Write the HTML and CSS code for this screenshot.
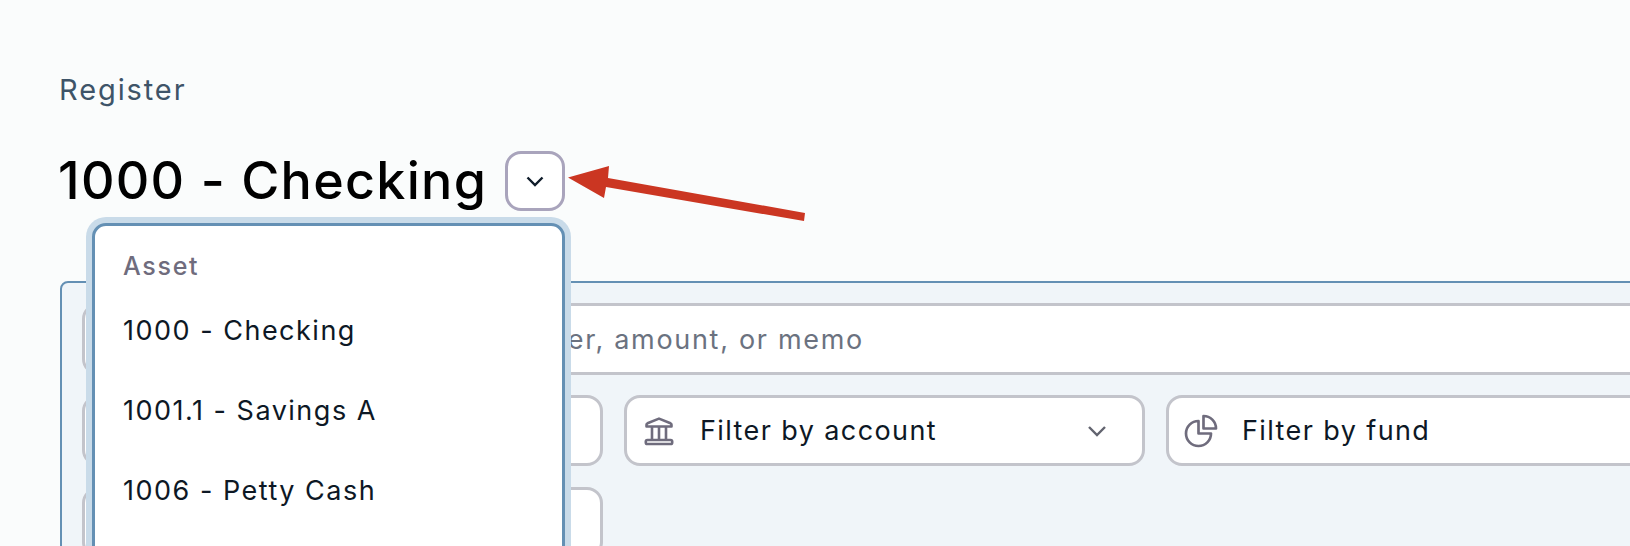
FILE: index.html
```html
<!DOCTYPE html>
<html lang="en">
<head>
  <meta charset="UTF-8">
  <title>Register</title>
  <link rel="stylesheet" href="styles.css">
</head>
<body>
  <div class="page">
    <div class="crumb">Register</div>
    <div class="title-row">
      <h1>1000 - Checking</h1>
      <button class="title-toggle">
        <svg width="24" height="24" viewBox="0 0 24 24" fill="none" stroke="#101c2a" stroke-width="2.4">
          <path d="M4.5 8.5 12 16l7.5-7.5"/>
        </svg>
      </button>
    </div>

    <div class="account-menu">
      <div class="menu-label">Asset</div>
      <div class="menu-item">1000 - Checking</div>
      <div class="menu-item">1001.1 - Savings A</div>
      <div class="menu-item">1006 - Petty Cash</div>
    </div>

    <div class="panel">
      <div class="search">Search by payee or payer, amount, or memo</div>
      <div class="filters">
        <div class="filter"></div>
        <div class="filter">
          <svg class="filter-icon" width="40" height="40" viewBox="-5 -5 40 40" fill="none" stroke="#6f6c7d" stroke-width="2.6" stroke-linejoin="round">
            <path d="M2.5 10.5V8.8c0-.7.4-1.2 1-1.5L15 2.6l11.5 4.7c.6.3 1 .8 1 1.5v1.7z"/>
            <path d="M8 11v13M15 11v13M22 11v13"/>
            <rect x="1.8" y="24" width="26.4" height="4" rx="1.6"/>
          </svg>
          <span>Filter by account</span>
          <svg class="filter-caret" width="22" height="22" viewBox="0 0 22 22" fill="none" stroke="#62646f" stroke-width="2.4">
            <path d="M3 7l8 8 8-8"/>
          </svg>
        </div>
        <div class="filter">
          <svg class="filter-icon" width="40" height="40" viewBox="0 0 24 24" fill="none" stroke="#6f6c7d" stroke-width="1.6" stroke-linejoin="round">
            <path d="M10.5 6a7.5 7.5 0 1 0 7.5 7.5h-7.5V6Z"/>
            <path d="M13.5 10.5H21A7.5 7.5 0 0 0 13.5 3v7.5Z"/>
          </svg>
          <span>Filter by fund</span>
        </div>
        <div class="filter"></div>
      </div>
    </div>

    <svg class="callout" width="260" height="72" viewBox="0 0 260 72">
      <path d="M2 27.5 43 16 42 28 239 63 238 71 40 37 38 48z" fill="#cb3622"/>
    </svg>
  </div>
</body>
</html>
```

FILE: styles.css
```css
html, body {
  height: 100%;
}

body {
  margin: 0;
  overflow: hidden;
  background-color: #fafcfc;
  font-family: "Inter", "Liberation Sans", sans-serif;
  color: #0d1825;
}

.page {
  position: relative;
  width: 1900px;
  height: 546px;
  padding: 70px 0 0 60px;
  box-sizing: border-box;
  overflow: hidden;
}

.crumb {
  margin-left: -1px;
  font-size: 29px;
  line-height: 40px;
  letter-spacing: 1.9px;
  color: #3e5468;
}

.title-row {
  display: flex;
  align-items: center;
  gap: 18px;
  margin-top: 41px;
  margin-left: -2px;
}

h1 {
  margin: 0;
  font-size: 52px;
  line-height: 60px;
  font-weight: 500;
  letter-spacing: 1.3px;
  color: #000;
}

.title-toggle {
  display: flex;
  align-items: center;
  justify-content: center;
  width: 60px;
  height: 60px;
  padding: 0;
  border: 3px solid #a9a4bc;
  border-radius: 16px;
  background-color: #fff;
}

.account-menu {
  position: absolute;
  left: 92px;
  top: 223px;
  width: 467px;
  height: 400px;
  border: 3px solid #6490b4;
  border-radius: 14px;
  background-color: #fff;
  box-shadow: 0 0 0 6px #c9dbe9;
  z-index: 2;
}

.menu-label {
  padding: 24px 0 0 28px;
  font-size: 25px;
  line-height: 32px;
  font-weight: 500;
  letter-spacing: 1.7px;
  color: #6f6c7d;
}

.menu-item {
  padding: 0 0 0 28px;
  font-size: 27px;
  line-height: 80px;
  letter-spacing: 1.5px;
}

.menu-label + .menu-item {
  margin-top: 9px;
}

.panel {
  margin-top: 70px;
  padding: 20px;
  border: 2px solid #6490b4;
  border-radius: 8px 0 0 8px;
  background-color: #f0f5f9;
}

.search {
  display: flex;
  align-items: center;
  height: 66px;
  padding-left: 144px;
  border: 3px solid #c3c4cb;
  border-radius: 16px;
  background-color: #fff;
  font-size: 27px;
  letter-spacing: 1.7px;
  color: #6b7280;
}

.filters {
  display: grid;
  grid-template-columns: repeat(3, 521px);
  gap: 21px;
  margin-top: 20px;
}

.filter {
  display: flex;
  align-items: center;
  gap: 21px;
  height: 65px;
  padding: 0 34px 0 12px;
  border: 3px solid #c3c4cb;
  border-radius: 16px;
  background-color: #fff;
  font-size: 27px;
  letter-spacing: 1.4px;
}

.filter-caret {
  margin-left: auto;
}

.callout {
  position: absolute;
  left: 566px;
  top: 150px;
}
```
